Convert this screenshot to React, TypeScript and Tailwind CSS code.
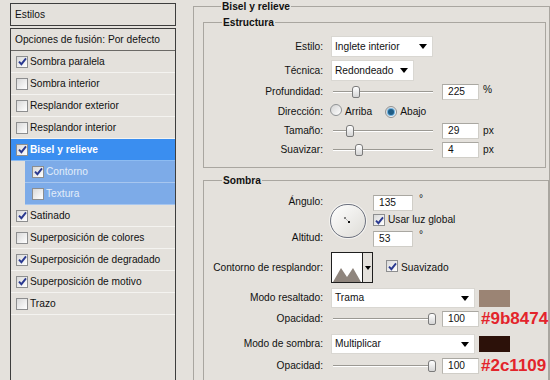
import React from "react";

const LIST = [
  { label: "Sombra paralela", on: true },
  { label: "Sombra interior", on: false },
  { label: "Resplandor exterior", on: false },
  { label: "Resplandor interior", on: false },
  { label: "Bisel y relieve", on: true, active: true },
  { label: "Contorno", on: true, sub: true },
  { label: "Textura", on: false, sub: true },
  { label: "Satinado", on: true },
  { label: "Superposición de colores", on: false },
  { label: "Superposición de degradado", on: true },
  { label: "Superposición de motivo", on: true },
  { label: "Trazo", on: false },
];

function Check({ on }: { on: boolean }) {
  return (
    <span className="inline-flex w-[12px] h-[12px] shrink-0 items-center justify-center border border-[#8d8e8f] bg-gradient-to-br from-[#d9d9d9] to-white">
      {on && (
        <svg width="9" height="9" viewBox="0 0 9 9">
          <path d="M1 4.6 L3.4 7.2 L8 1.4" stroke="#2a3990" strokeWidth="1.9" fill="none" />
        </svg>
      )}
    </span>
  );
}

function Radio({ on }: { on: boolean }) {
  return (
    <span className="inline-flex w-[12px] h-[12px] shrink-0 items-center justify-center rounded-full border border-[#8f9294] bg-gradient-to-br from-[#d4d4d4] to-white">
      {on && <span className="w-[6px] h-[6px] rounded-full bg-[#1f5d86] ring-1 ring-[#6fb1df]" />}
    </span>
  );
}

function Select({ text, w }: { text: string; w: string }) {
  return (
    <div className={`${w} flex items-center justify-between bg-white border border-[#d9d7d2] pl-[3px] pr-[5px] h-full`}>
      <span>{text}</span>
      <span className="w-0 h-0 border-l-[4px] border-r-[4px] border-t-[5px] border-l-transparent border-r-transparent border-t-black" />
    </div>
  );
}

function Field({ value, w = "w-[37px]" }: { value: string; w?: string }) {
  return (
    <div className={`${w} h-[16px] bg-white border border-[#d0cec8] border-t-[#a9a7a1] border-l-[#b5b3ad] pl-[5px] leading-[14px]`}>
      {value}
    </div>
  );
}

function Slider({ pos }: { pos: number }) {
  return (
    <div className="relative w-[103px] h-[14px] flex items-center">
      <div className="ml-[2px] w-[100px] h-[2px] border-t border-b border-t-[#9b9993] border-b-white" />
      <div
        className="absolute top-[1px] w-[8px] h-[12px] rounded-t-[3px] rounded-b-[2px] border border-[#7b7b7b] bg-gradient-to-b from-white to-[#d5d5d5]"
        style={{ left: pos }}
      />
    </div>
  );
}

function Label({ children }: { children: React.ReactNode }) {
  return <div className="w-[119px] text-right shrink-0">{children}</div>;
}

export default function App() {
  return (
    <div className="w-[550px] h-[380px] overflow-hidden bg-[#e4e1dc] flex font-['Liberation_Sans',Arial,sans-serif] text-[10.2px] text-[#111]">
      {/* left list */}
      <div className="ml-[10px] mt-[3px] w-[166px] flex flex-col shrink-0">
        <div className="h-[23px] shrink-0 border border-[#3d3d3d] flex items-center pl-[4px]">Estilos</div>
        <div className="mt-[2px] h-[400px] shrink-0 border border-[#3d3d3d]">
          <div className="h-[22px] border-b border-[#6b6966] flex items-center pl-[4px]">Opciones de fusión: Por defecto</div>
          {LIST.map((it) =>
            it.sub ? (
              <div key={it.label} className="h-[22px] pl-[14px]">
                <div className="h-full bg-[#7dabe8] border-b border-[#a7c6ef] flex items-center gap-[2px] pl-[7px] text-[#e2edfa]">
                  <Check on={it.on} />
                  <span>{it.label}</span>
                </div>
              </div>
            ) : (
              <div
                key={it.label}
                className={`h-[22px] flex items-center gap-[2px] pl-[5px] border-b ${
                  it.active ? "bg-[#3a8ef0] border-[#8dbcf2] text-white font-bold" : "border-[#f4f3f0]"
                }`}
              >
                <Check on={it.on} />
                <span>{it.label}</span>
              </div>
            )
          )}
        </div>
      </div>

      {/* right settings */}
      <fieldset className="ml-[17px] w-[356px] h-[420px] border border-[#a9a6a0] pl-[9px] shrink-0">
        <legend className="ml-[18px] px-[1px] font-bold leading-[13px]">Bisel y relieve</legend>

        <fieldset className="mt-[3px] w-[343px] border border-[#a9a6a0] pt-[7px] pb-[9px]">
          <legend className="ml-[18px] px-[1px] font-bold leading-[13px]">Estructura</legend>
          <div className="flex items-center h-[21px]">
            <Label>Estilo:</Label>
            <div className="ml-[8px] h-full">
              <Select text="Inglete interior" w="w-[102px]" />
            </div>
          </div>
          <div className="flex items-center h-[21px] mt-[3px]">
            <Label>Técnica:</Label>
            <div className="ml-[8px] h-full">
              <Select text="Redondeado" w="w-[83px]" />
            </div>
          </div>
          <div className="flex items-center h-[16px] mt-[3px]">
            <Label>Profundidad:</Label>
            <div className="ml-[8px]"><Slider pos={21} /></div>
            <div className="ml-[8px]"><Field value="225" /></div>
            <span className="ml-[4px] self-start leading-[12px]">%</span>
          </div>
          <div className="flex items-center h-[16px] mt-[4px]">
            <Label>Dirección:</Label>
            <div className="ml-[7px]"><Radio on={false} /></div>
            <span className="ml-[3px]">Arriba</span>
            <div className="ml-[13px]"><Radio on={true} /></div>
            <span className="ml-[3px]">Abajo</span>
          </div>
          <div className="flex items-center h-[16px] mt-[3px]">
            <Label>Tamaño:</Label>
            <div className="ml-[8px]"><Slider pos={15} /></div>
            <div className="ml-[8px]"><Field value="29" /></div>
            <span className="ml-[4px]">px</span>
          </div>
          <div className="flex items-center h-[16px] mt-[3px]">
            <Label>Suavizar:</Label>
            <div className="ml-[8px]"><Slider pos={24} /></div>
            <div className="ml-[8px]"><Field value="4" /></div>
            <span className="ml-[4px]">px</span>
          </div>
        </fieldset>

        <fieldset className="mt-[6px] w-[343px] h-[260px] border border-[#a9a6a0] pt-[8px]">
          <legend className="ml-[18px] px-[1px] font-bold leading-[13px]">Sombra</legend>

          <div className="flex h-[51px]">
            <div className="w-[119px] flex flex-col justify-between text-right shrink-0">
              <div className="leading-[14px]">Ángulo:</div>
              <div className="leading-[16px]">Altitud:</div>
            </div>
            <div className="ml-[7px] self-center w-[36px] h-[34px] rounded-full border-[1.5px] border-[#6d7280] bg-gradient-to-br from-white to-[#dedcd7] shadow-[0_0_0_1px_#f4f3f0] flex items-center justify-center">
              <svg width="20" height="20" viewBox="0 0 20 20">
                <path d="M6 7 L8 7 M7 6 L7 8" stroke="#444" strokeWidth="0.8" />
                <path d="M8 8 L10 10" stroke="#777" strokeWidth="0.8" strokeDasharray="1 1" />
                <rect x="10" y="10" width="2" height="2" fill="#111" />
              </svg>
            </div>
            <div className="ml-[7px] flex flex-col">
              <div className="flex">
                <Field value="135" w="w-[40px]" />
                <span className="ml-[6px] leading-[8px]">°</span>
              </div>
              <div className="mt-[2px] h-[14px] flex items-center gap-[3px]">
                <Check on={true} />
                <span>Usar luz global</span>
              </div>
              <div className="mt-[4px] flex">
                <Field value="53" w="w-[40px]" />
                <span className="ml-[6px] leading-[8px]">°</span>
              </div>
            </div>
          </div>

          <div className="flex items-center h-[31px] mt-[6px]">
            <Label>Contorno de resplandor:</Label>
            <div className="ml-[8px] h-full w-[42px] border border-[#1e1e1e] flex">
              <div className="w-[30px] h-full bg-white flex items-end">
                <svg width="30" height="29" viewBox="0 0 30 29">
                  <path d="M1 29 L9 15 L15 24 L21 15 L29 29 Z" fill="#8f857d" />
                </svg>
              </div>
              <div className="flex-1 border-l border-[#1e1e1e] flex items-center justify-center">
                <span className="w-0 h-0 border-l-[3px] border-r-[3px] border-t-[4px] border-l-transparent border-r-transparent border-t-black" />
              </div>
            </div>
            <div className="ml-[13px]"><Check on={true} /></div>
            <span className="ml-[3px]">Suavizado</span>
          </div>

          <div className="flex items-center h-[20px] mt-[5px]">
            <Label>Modo resaltado:</Label>
            <div className="ml-[8px] h-full">
              <Select text="Trama" w="w-[144px]" />
            </div>
            <div className="ml-[4px] w-[31px] h-[17px] bg-[#9b8474]" />
          </div>
          <div className="flex items-center h-[15px] mt-[3px]">
            <Label>Opacidad:</Label>
            <div className="ml-[8px]"><Slider pos={97} /></div>
            <div className="ml-[8px]"><Field value="100" /></div>
            <span className="ml-[2px] text-[17px] font-bold leading-none text-[#e3242b]">#9b8474</span>
          </div>

          <div className="flex items-center h-[20px] mt-[8px]">
            <Label>Modo de sombra:</Label>
            <div className="ml-[8px] h-full">
              <Select text="Multiplicar" w="w-[144px]" />
            </div>
            <div className="ml-[4px] w-[31px] h-[16px] bg-[#2c1109]" />
          </div>
          <div className="flex items-center h-[15px] mt-[4px]">
            <Label>Opacidad:</Label>
            <div className="ml-[8px]"><Slider pos={97} /></div>
            <div className="ml-[8px]"><Field value="100" /></div>
            <span className="ml-[2px] text-[17px] font-bold leading-none text-[#e3242b]">#2c1109</span>
          </div>
        </fieldset>
      </fieldset>
    </div>
  );
}
